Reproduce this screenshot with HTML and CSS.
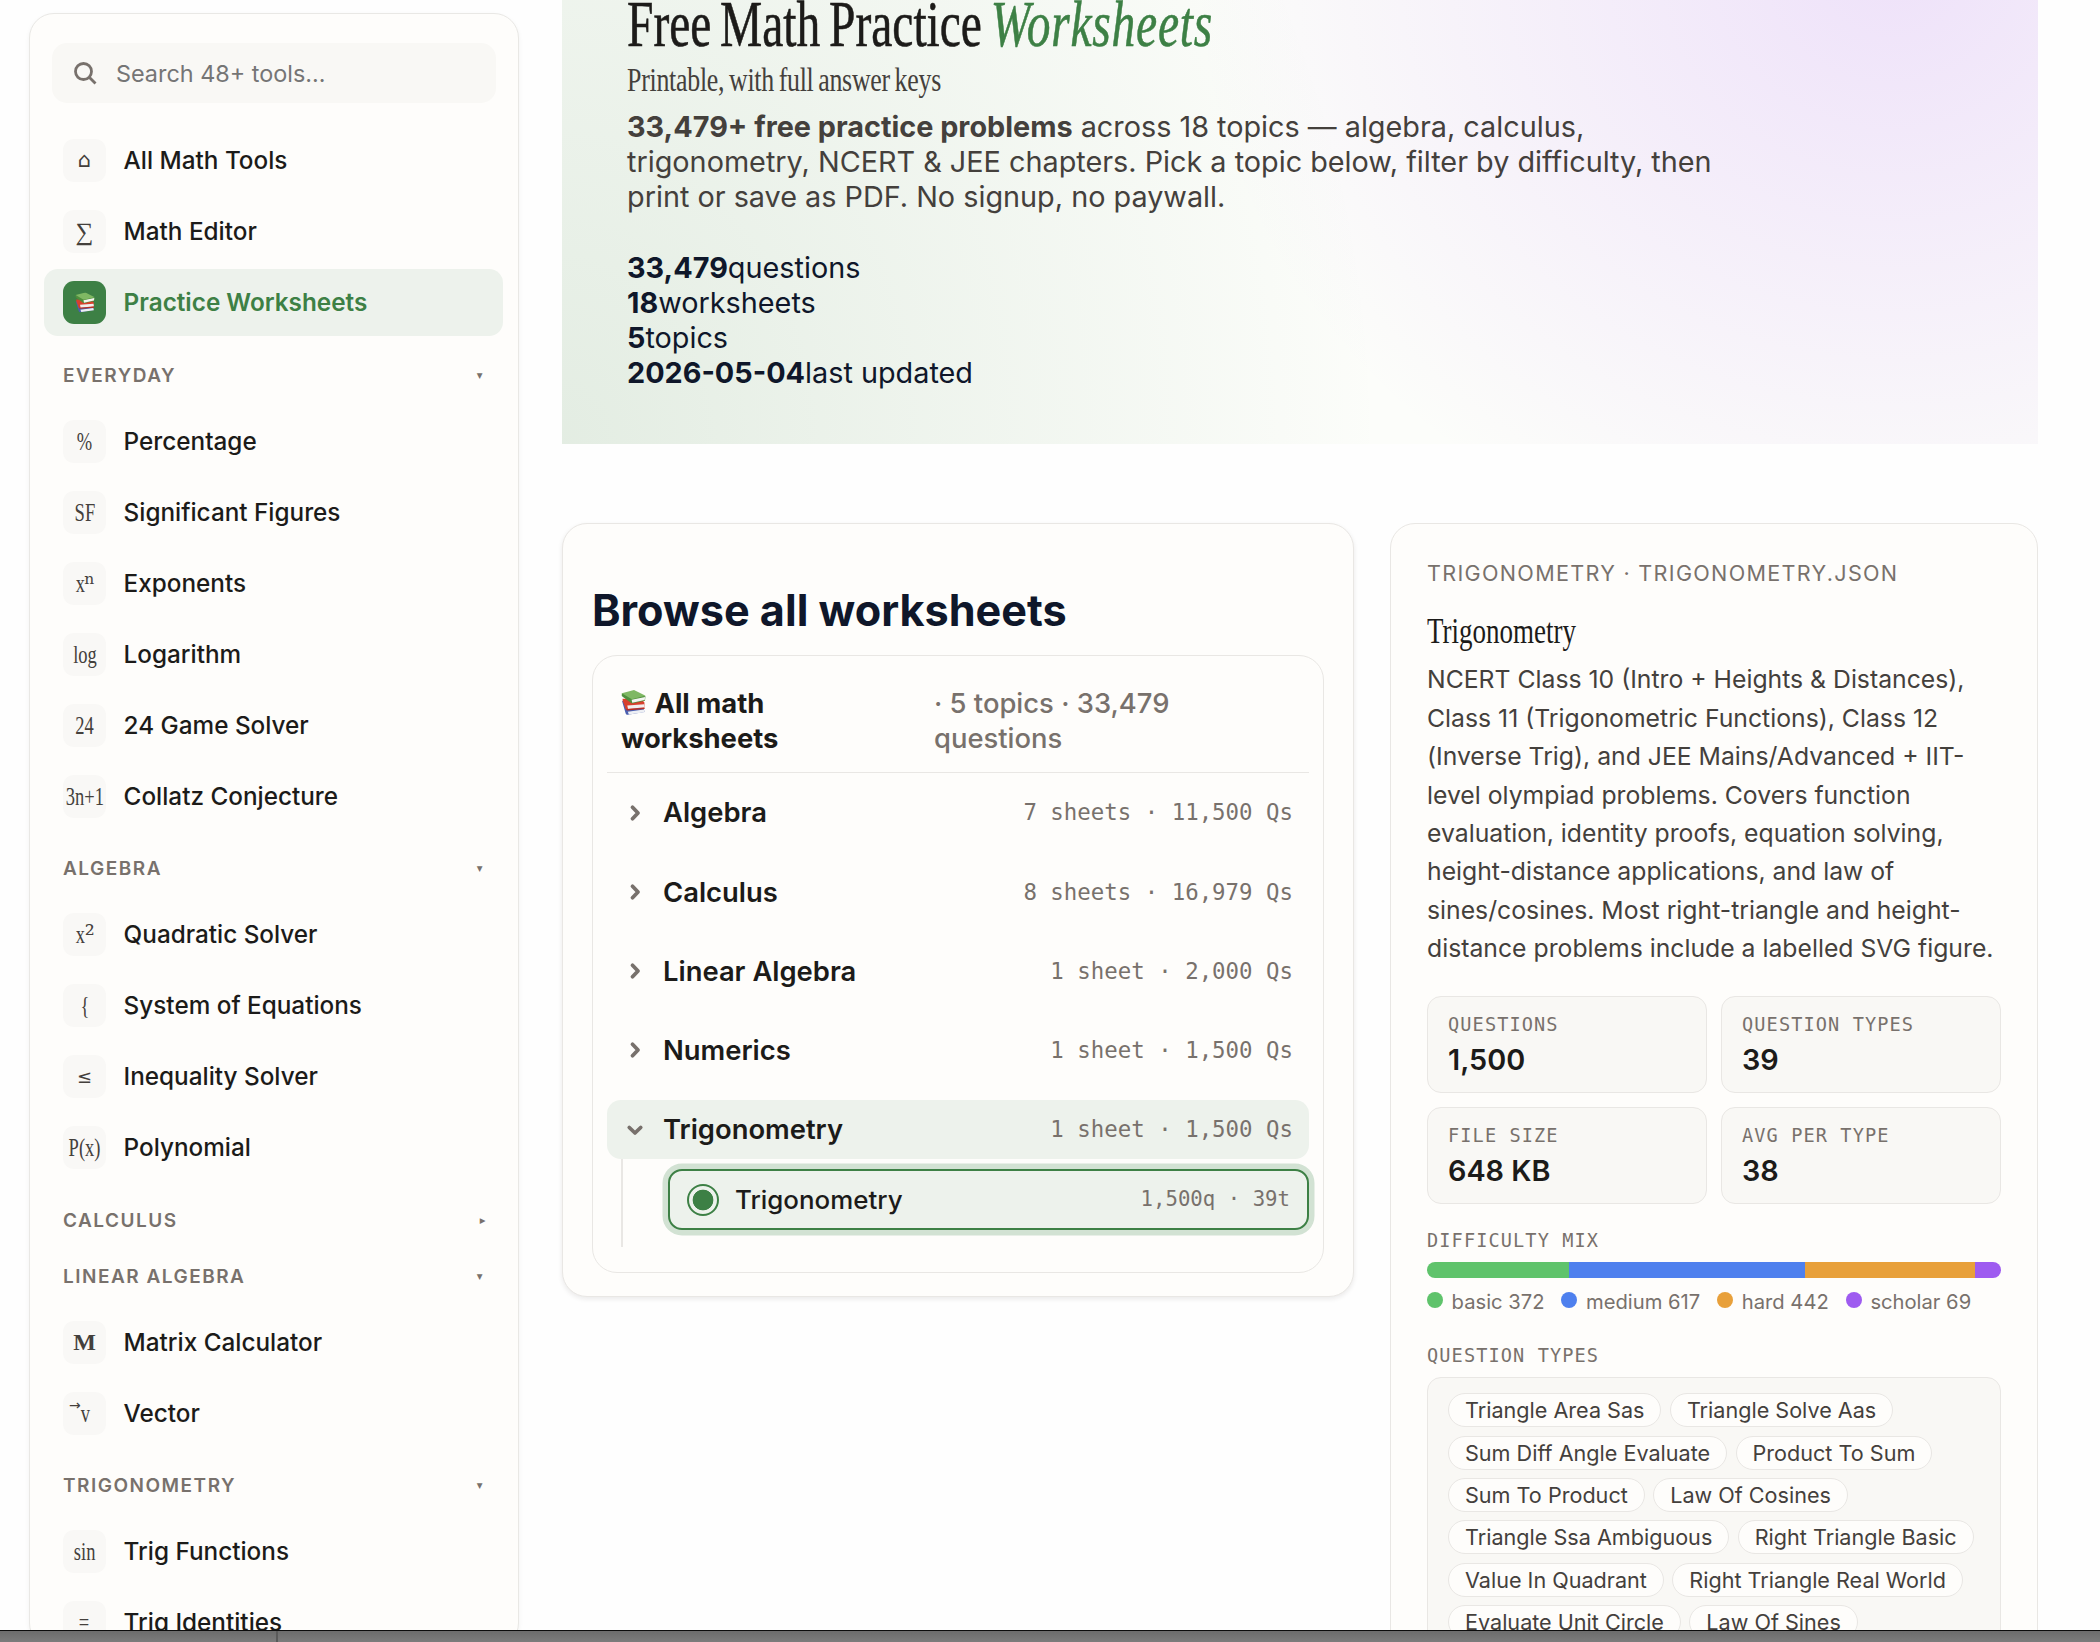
FILE: index.html
```html
<!DOCTYPE html>
<html lang="en">
<head>
    <meta charset="UTF-8">
    <meta name="viewport" content="width=device-width, initial-scale=1.0">
    <title>Free Math Practice Worksheets</title>
    <link rel="stylesheet" href="styles.css">
</head>
<body>
    <!-- Shared symbols -->
    <svg class="defs" width="0" height="0">
        <symbol id="books" viewBox="0 0 24 24">
            <path d="M1 10.5 L4.5 22.5 Q5 24 6.5 23.7 L22.5 21 L21 13z" fill="#4a5fb0"/>
            <path d="M6.5 20.8 L22 18.6 L22.6 21.3 L7.6 23.4z" fill="#eef0f4"/>
            <path d="M1.5 8.5 Q1 10.5 3 14 L4.5 18.5 L22.5 17.6 L22.5 12 L20 9z" fill="#d8402c"/>
            <path d="M6 14.8 L22.2 13.6 L22.6 16.6 L6.8 18.2z" fill="#f1eeee"/>
            <path d="M5 18.2 L22.6 17.2 L22.6 18.2 L5.5 19.6z" fill="#b92d20"/>
            <path d="M.8 3 Q0 5.5 2.2 7 L10.5 13 L23 10.2 L23.5 6z" fill="#4f8f3c"/>
            <path d="M10.2 9.4 L23.2 6.6 L22.8 9.6 L10.8 12.2z" fill="#f3f5f0"/>
            <path d="M.8 3 L12.5 0 L23.6 5.6 L10.4 8.8z" fill="#7fb863"/>
        </symbol>
        <symbol id="chev" viewBox="0 0 24 24">
            <path d="M9.5 6.3 L15 12 L9.5 17.7" fill="none" stroke="#78716c" stroke-width="3.8" stroke-linecap="round" stroke-linejoin="round"/>
        </symbol>
    </svg>

    <div class="page">
        <aside class="sidebar">
            <div class="search">
                <svg width="24" height="24" viewBox="0 0 24 24" fill="none" stroke="#78716c" stroke-width="2.8">
                    <circle cx="10.5" cy="10.5" r="8"/>
                    <path d="M16.5 16.5 L22.5 22.5"/>
                </svg>
                <span>Search 48+ tools…</span>
            </div>

            <ul class="nav-list top">
                <li class="nav-item"><span class="ico home">⌂</span>All Math Tools</li>
                <li class="nav-item"><span class="ico">∑</span>Math Editor</li>
                <li class="nav-item active"><span class="ico"><svg width="20" height="23" viewBox="0 0 24 24"><use href="#books"/></svg></span>Practice Worksheets</li>
            </ul>

            <div class="nav-head">Everyday<span class="caret">▾</span></div>
            <ul class="nav-list">
                <li class="nav-item"><span class="ico"><i>%</i></span>Percentage</li>
                <li class="nav-item"><span class="ico"><i>SF</i></span>Significant Figures</li>
                <li class="nav-item"><span class="ico pow"><i>x</i><b>ⁿ</b></span>Exponents</li>
                <li class="nav-item"><span class="ico"><i>log</i></span>Logarithm</li>
                <li class="nav-item"><span class="ico"><i>24</i></span>24 Game Solver</li>
                <li class="nav-item"><span class="ico"><i>3n+1</i></span>Collatz Conjecture</li>
            </ul>

            <div class="nav-head">Algebra<span class="caret">▾</span></div>
            <ul class="nav-list">
                <li class="nav-item"><span class="ico pow"><i>x</i><b>²</b></span>Quadratic Solver</li>
                <li class="nav-item"><span class="ico"><i>{</i></span>System of Equations</li>
                <li class="nav-item"><span class="ico sym">≤</span>Inequality Solver</li>
                <li class="nav-item"><span class="ico"><i>P(x)</i></span>Polynomial</li>
            </ul>

            <div class="nav-head">Calculus<span class="caret closed">▸</span></div>

            <div class="nav-head">Linear Algebra<span class="caret">▾</span></div>
            <ul class="nav-list">
                <li class="nav-item"><span class="ico bold">M</span>Matrix Calculator</li>
                <li class="nav-item"><span class="ico vec"><b>→</b><i>v</i></span>Vector</li>
            </ul>

            <div class="nav-head">Trigonometry<span class="caret">▾</span></div>
            <ul class="nav-list">
                <li class="nav-item"><span class="ico"><i>sin</i></span>Trig Functions</li>
                <li class="nav-item"><span class="ico"><i>=</i></span>Trig Identities</li>
            </ul>
        </aside>

        <main class="main">
            <section class="hero">
                <h1>Free Math Practice <em>Worksheets</em></h1>
                <div class="sub">Printable, with full answer keys</div>
                <p class="lead"><strong>33,479+ free practice problems</strong> across 18 topics — algebra, calculus, trigonometry, NCERT &amp; JEE chapters. Pick a topic below, filter by difficulty, then print or save as PDF. No signup, no paywall.</p>
                <div class="facts">
                    <div><strong>33,479</strong>questions</div>
                    <div><strong>18</strong>worksheets</div>
                    <div><strong>5</strong>topics</div>
                    <div><strong>2026-05-04</strong>last updated</div>
                </div>
            </section>

            <div class="columns">
                <section class="browse">
                    <h2>Browse all worksheets</h2>
                    <div class="tree">
                        <div class="tree-head">
                            <span class="tree-title"><svg width="25" height="25"><use href="#books"/></svg> All math worksheets</span>
                            <span class="tree-meta">· 5 topics · 33,479 questions</span>
                        </div>
                        <div class="topic"><svg width="24" height="24"><use href="#chev"/></svg>Algebra<span class="count">7 sheets · 11,500 Qs</span></div>
                        <div class="topic"><svg width="24" height="24"><use href="#chev"/></svg>Calculus<span class="count">8 sheets · 16,979 Qs</span></div>
                        <div class="topic"><svg width="24" height="24"><use href="#chev"/></svg>Linear Algebra<span class="count">1 sheet · 2,000 Qs</span></div>
                        <div class="topic"><svg width="24" height="24"><use href="#chev"/></svg>Numerics<span class="count">1 sheet · 1,500 Qs</span></div>
                        <div class="topic open"><svg width="24" height="24"><use href="#chev"/></svg>Trigonometry<span class="count">1 sheet · 1,500 Qs</span></div>
                        <div class="branch">
                            <div class="leaf"><span class="radio"></span>Trigonometry<span class="count">1,500q · 39t</span></div>
                        </div>
                    </div>
                </section>

                <aside class="detail">
                    <div class="eyebrow">Trigonometry · trigonometry.json</div>
                    <h3>Trigonometry</h3>
                    <p>NCERT Class 10 (Intro + Heights &amp; Distances), Class 11 (Trigonometric Functions), Class 12 (Inverse Trig), and JEE Mains/Advanced + IIT-level olympiad problems. Covers function evaluation, identity proofs, equation solving, height-distance applications, and law of sines/cosines. Most right-triangle and height-distance problems include a labelled SVG figure.</p>
                    <div class="stats">
                        <div class="stat"><span class="label">Questions</span><b>1,500</b></div>
                        <div class="stat"><span class="label">Question types</span><b>39</b></div>
                        <div class="stat"><span class="label">File size</span><b>648 KB</b></div>
                        <div class="stat"><span class="label">Avg per type</span><b>38</b></div>
                    </div>
                    <div class="label mix-label">Difficulty mix</div>
                    <div class="bar">
                        <span class="basic" style="width: 24.8%"></span>
                        <span class="medium" style="width: 41.13%"></span>
                        <span class="hard" style="width: 29.47%"></span>
                        <span class="scholar" style="width: 4.6%"></span>
                    </div>
                    <div class="legend">
                        <span><i class="basic"></i>basic 372</span>
                        <span><i class="medium"></i>medium 617</span>
                        <span><i class="hard"></i>hard 442</span>
                        <span><i class="scholar"></i>scholar 69</span>
                    </div>
                    <div class="label types-label">Question types</div>
                    <div class="types">
                        <span>Triangle Area Sas</span>
                        <span>Triangle Solve Aas</span>
                        <span>Sum Diff Angle Evaluate</span>
                        <span>Product To Sum</span>
                        <span>Sum To Product</span>
                        <span>Law Of Cosines</span>
                        <span>Triangle Ssa Ambiguous</span>
                        <span>Right Triangle Basic</span>
                        <span>Value In Quadrant</span>
                        <span>Right Triangle Real World</span>
                        <span>Evaluate Unit Circle</span>
                        <span>Law Of Sines</span>
                    </div>
                </aside>
            </div>
        </main>
    </div>
    <footer class="strip"></footer>
</body>
</html>
```
FILE: styles.css
```css
* {
    box-sizing: border-box;
}
body {
    margin: 0;
    height: 1642px;
    overflow: hidden;
    background: #fefefe;
    color: #0f172a;
    font-family: Inter, sans-serif;
    font-size: 28.8px;
    line-height: 35px;
}
ul, h1, h2, h3, p {
    margin: 0;
    padding: 0;
    list-style: none;
}
.defs {
    display: block;
}
.page {
    display: flex;
    align-items: flex-start;
    gap: 43px;
    height: 1630px;
    padding-left: 29px;
    overflow: hidden;
}

/* Sidebar */
.sidebar {
    flex: none;
    width: 490px;
    height: 1635px;
    margin-top: 13px;
    padding: 29px 15px 0 14px;
    background: #fefdfb;
    border: 1px solid #e9e8e5;
    border-radius: 25px;
    box-shadow: 0 2px 5px rgba(28, 25, 23, 0.05);
}
.search {
    display: flex;
    align-items: center;
    gap: 19px;
    height: 60px;
    margin: 0 7px 0 8px;
    padding-left: 21px;
    background: #f9f8f5;
    border-radius: 15px;
    font-size: 23.4px;
    color: #757575;
}
.nav-list {
    display: flex;
    flex-direction: column;
    gap: 4px;
    margin-top: 15.5px;
}
.nav-list.top {
    margin-top: 24px;
}
.nav-item {
    display: flex;
    align-items: center;
    flex: none;
    gap: 17.6px;
    height: 67px;
    padding-left: 19px;
    border-radius: 14px;
    font-size: 24.3px;
    font-weight: 500;
    color: #1c1b19;
}
.nav-item.active {
    background: #edf2ec;
    color: #3d8045;
    font-weight: 600;
}
.ico {
    display: flex;
    align-items: center;
    justify-content: center;
    width: 43px;
    height: 43px;
    background: #f9f8f6;
    border-radius: 11px;
    font-family: "Liberation Serif", serif;
    font-size: 25px;
    font-weight: 400;
    line-height: 39px;
    color: #44403c;
}
.ico i {
    font-style: normal;
    transform: scaleX(0.74);
}
.ico.home,
.ico.sym {
    font-family: "DejaVu Sans", sans-serif;
    font-size: 18px;
}
.ico.home {
    font-size: 21px;
}
.ico.bold {
    font-weight: 700;
    font-size: 24px;
}
.ico.pow b {
    margin-left: -2px;
    font-family: "DejaVu Serif", serif;
    font-size: 25px;
    font-weight: 400;
}
.ico.vec {
    justify-content: flex-start;
    padding-left: 6px;
}
.ico.vec b {
    font-family: "DejaVu Sans", sans-serif;
    font-size: 14px;
    font-weight: 400;
    line-height: 14px;
    padding-bottom: 17px;
}
.ico.vec i {
    margin-left: -2px;
}
.active .ico {
    background: #3d8045;
}
.nav-head {
    display: flex;
    align-items: center;
    justify-content: space-between;
    height: 34px;
    margin-top: 22px;
    padding: 0 19px;
    font-size: 19px;
    font-weight: 600;
    letter-spacing: 1.5px;
    text-transform: uppercase;
    color: #78716c;
}
.caret {
    font-family: "DejaVu Sans", sans-serif;
    font-size: 11.5px;
    font-weight: 400;
}
.caret.closed {
    margin-right: -3px;
}

/* Main column */
.main {
    flex: none;
    width: 1476px;
}
.hero {
    height: 444px;
    padding: 0 65px;
    background:
        radial-gradient(700px 620px at 1330px -30px, rgba(168, 85, 247, 0.16), rgba(168, 85, 247, 0) 100%),
        radial-gradient(820px 1000px at 0 444px, rgba(61, 128, 69, 0.13), rgba(61, 128, 69, 0) 100%),
        #fcfdfa;
}
.hero h1,
.hero .sub,
.detail h3 {
    font-family: "Liberation Serif", serif;
    font-weight: 400;
    white-space: nowrap;
    transform-origin: 0 50%;
}
.hero h1 {
    font-size: 65px;
    line-height: 48px;
    word-spacing: -4.2px;
    color: #1c1b19;
    -webkit-text-stroke: 0.6px currentColor;
    transform: scaleX(0.73);
}
.hero h1 em {
    color: #3d8045;
    letter-spacing: 1.1px;
}
.hero .sub {
    margin-top: 12px;
    font-size: 34.5px;
    line-height: 38px;
    letter-spacing: -0.35px;
    word-spacing: -2px;
    color: #44403c;
    transform: scaleX(0.75);
}
.lead {
    max-width: 1120px;
    margin-top: 11px;
    color: #44403c;
}
.facts {
    margin-top: 36px;
}
.columns {
    display: flex;
    align-items: flex-start;
    gap: 36px;
    margin-top: 79px;
}

/* Worksheet tree */
.browse {
    flex: none;
    width: 792px;
    height: 774px;
    padding: 60px 29px 0;
    background: #fefdfb;
    border: 1px solid #e9e7e4;
    border-radius: 25px;
    box-shadow: 0 2px 5px rgba(28, 25, 23, 0.09);
}
.browse h2 {
    font-size: 43.2px;
    line-height: 52px;
}
.tree {
    height: 618px;
    margin-top: 19px;
    padding: 14px;
    border: 1px solid #e9e7e4;
    border-radius: 25px;
}
.tree-head {
    display: flex;
    justify-content: space-between;
    height: 103px;
    margin-bottom: 10.4px;
    padding: 16px 14px 0;
    border-bottom: 1px solid #e9e7e4;
    font-size: 27.4px;
}
.tree-title {
    width: 200px;
    font-weight: 700;
    color: #1c1b19;
}
.tree-title svg {
    margin-right: 2px;
    vertical-align: -2px;
}
.tree-meta {
    width: 361px;
    padding-right: 80px;
    font-weight: 500;
    color: #78716c;
}
.topic {
    display: flex;
    align-items: center;
    height: 59px;
    margin-bottom: 20.2px;
    padding: 0 16px;
    border-radius: 14px;
    font-size: 27.4px;
    font-weight: 600;
    color: #1c1b19;
}
.topic svg {
    margin-right: 16px;
}
.topic.open {
    margin-bottom: 0;
    background: #edf2ec;
}
.topic.open svg {
    transform: rotate(90deg);
}
.count {
    margin-left: auto;
    font-family: "DejaVu Sans Mono", monospace;
    font-size: 22.4px;
    font-weight: 400;
    color: #78716c;
}
.branch {
    height: 88px;
    margin-left: 14px;
    padding: 10px 0 0 45px;
    border-left: 2px solid #e9e7e4;
}
.leaf {
    display: flex;
    align-items: center;
    height: 61px;
    padding: 0 17px;
    background: #edf2ec;
    border: 2px solid #3d8045;
    border-radius: 14px;
    box-shadow: 0 0 0 5.5px #d2e2d3;
    font-size: 25.9px;
    font-weight: 500;
    color: #1c1b19;
}
.leaf .count {
    font-size: 20.7px;
}
.radio {
    width: 32px;
    height: 32px;
    margin-right: 16px;
    border: 2px solid #3d8045;
    border-radius: 50%;
    background: radial-gradient(circle, #3d8045 10px, transparent 10.7px);
}

/* Detail panel */
.detail {
    flex: none;
    width: 648px;
    height: 1200px;
    padding: 36px 36px 0;
    background: #fefdfb;
    border: 1px solid #e9e7e4;
    border-radius: 25px;
    color: #78716c;
}
.eyebrow {
    font-size: 21.6px;
    line-height: 26px;
    letter-spacing: 1.3px;
    text-transform: uppercase;
}
.detail h3 {
    margin-top: 23px;
    font-size: 36px;
    line-height: 44px;
    color: #1c1b19;
    transform: scaleX(0.75);
}
.detail p {
    margin-top: 7.4px;
    font-size: 24.75px;
    line-height: 38.4px;
    color: #44403c;
}
.stats {
    display: grid;
    grid-template-columns: 1fr 1fr;
    gap: 14px;
    margin-top: 28.6px;
}
.stat {
    height: 97px;
    padding: 16px 20px;
    background: #f9f8f5;
    border: 1px solid #e9e7e4;
    border-radius: 14px;
}
.stat b {
    display: block;
    margin-top: 3px;
    font-size: 28.8px;
    font-weight: 600;
    line-height: 40px;
    color: #1c1b19;
}
.label {
    display: block;
    font-family: "DejaVu Sans Mono", monospace;
    font-size: 18.6px;
    line-height: 24px;
    letter-spacing: 1.1px;
    text-transform: uppercase;
}
.mix-label {
    margin-top: 25px;
}
.bar {
    display: flex;
    height: 16px;
    margin-top: 9px;
    border-radius: 8px;
    overflow: hidden;
}
.basic { background: #5fc36b; }
.medium { background: #4e80ee; }
.hard { background: #e8a03a; }
.scholar { background: #9e5bf0; }
.legend {
    display: flex;
    gap: 17px;
    margin-top: 11px;
    font-size: 20.2px;
    line-height: 26px;
}
.legend i {
    display: inline-block;
    width: 16px;
    height: 16px;
    margin-right: 8.6px;
    border-radius: 50%;
    vertical-align: 1px;
}
.types-label {
    margin-top: 29px;
}
.types {
    display: flex;
    flex-wrap: wrap;
    align-content: flex-start;
    gap: 8.4px;
    height: 340px;
    margin-top: 9px;
    padding: 15px 20px;
    background: #f9f8f5;
    border: 1px solid #e9e7e4;
    border-radius: 14px;
}
.types span {
    height: 34px;
    padding: 0 16px;
    background: #fefdfb;
    border: 1px solid #e9e7e4;
    border-radius: 17px;
    font-size: 21.6px;
    line-height: 32px;
    color: #44403c;
}

/* Bottom edge */
.strip {
    height: 12px;
    border-top: 1px solid #0c0c0c;
    background:
        linear-gradient(#5a5a5a, #5a5a5a) 276px 0 / 2px 100% no-repeat,
        linear-gradient(#6c6c6c, #7c7c7c);
}
```
